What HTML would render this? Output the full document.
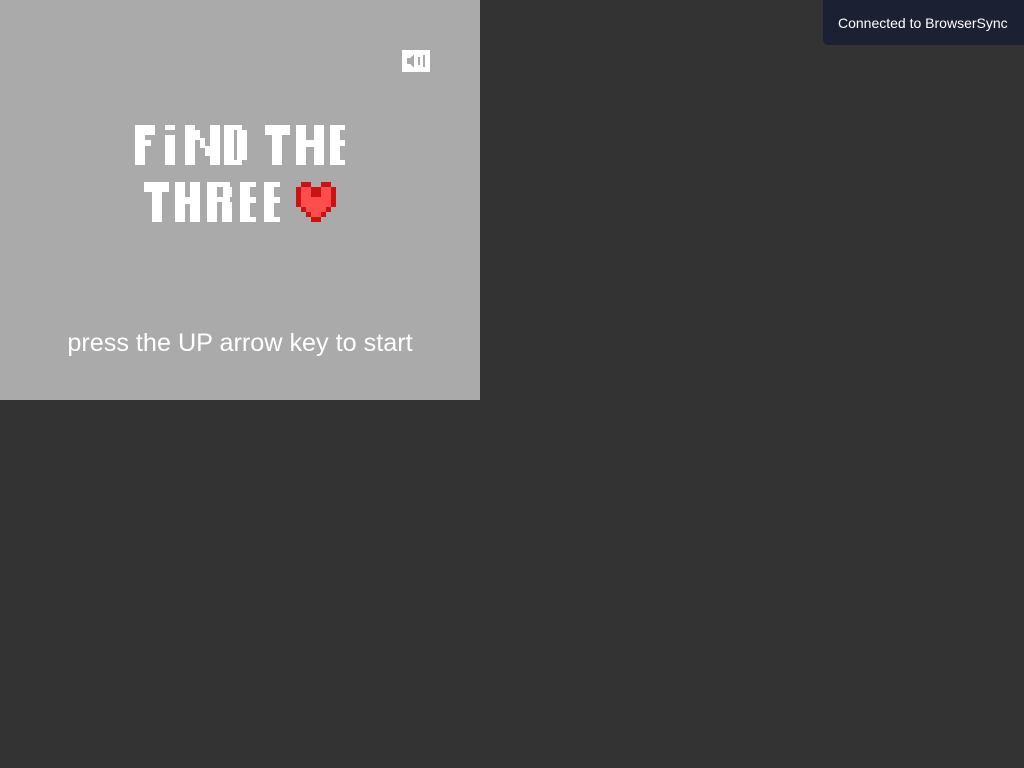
<!DOCTYPE html>
<html><head><meta charset="utf-8"><style>
html,body{margin:0;padding:0;background:#333;width:1024px;height:768px;overflow:hidden;font-family:"Liberation Sans",Arial,sans-serif}
#game{position:absolute;left:0;top:0;width:480px;height:400px;background:#aaa}
#msg{position:absolute;left:0;width:480px;top:328px;text-align:center;color:#fff;font-size:25.2px;line-height:30px}
#bs{position:absolute;left:823px;top:0;width:201px;height:45px;background:#1b2032;color:#fff;font-size:14px;line-height:46px;padding-left:15px;box-sizing:border-box;border-bottom-left-radius:5px;white-space:nowrap;overflow:hidden}
</style></head><body>
<div id="game">
<svg width="480" height="400" style="position:absolute;left:0;top:0" shape-rendering="crispEdges">
<g fill="#fff">
<rect x="135" y="125" width="10" height="40"/><rect x="135" y="125" width="20" height="10"/><rect x="135" y="140" width="16" height="6"/>
<rect x="165" y="125" width="10" height="5"/><rect x="165" y="135" width="10" height="30"/>
<rect x="185" y="125" width="10" height="40"/><rect x="210" y="125" width="10" height="40"/><rect x="195" y="130" width="5" height="10"/><rect x="200" y="138" width="5" height="10"/><rect x="205" y="146" width="5" height="10"/>
<rect x="224" y="125" width="10" height="40"/><rect x="224" y="125" width="18" height="5"/><rect x="224" y="160" width="18" height="5"/><rect x="237" y="130" width="10" height="30"/>
<rect x="265" y="125" width="25" height="10"/><rect x="272" y="125" width="10" height="40"/>
<rect x="296" y="125" width="10" height="40"/><rect x="314" y="125" width="10" height="40"/><rect x="296" y="140" width="28" height="7"/>
<rect x="330" y="125" width="10" height="40"/><rect x="330" y="125" width="15" height="5"/><rect x="330" y="140" width="15" height="6"/><rect x="330" y="160" width="15" height="5"/>
<rect x="144" y="182" width="25" height="10"/><rect x="152" y="182" width="10" height="40"/>
<rect x="175" y="182" width="10" height="40"/><rect x="190" y="182" width="10" height="40"/><rect x="175" y="197" width="25" height="7"/>
<rect x="207" y="182" width="10" height="40"/><rect x="207" y="182" width="23" height="5"/><rect x="223" y="187" width="9" height="10"/><rect x="207" y="197" width="23" height="5"/><rect x="222" y="202" width="10" height="20"/>
<rect x="240" y="182" width="10" height="40"/><rect x="240" y="182" width="16" height="5"/><rect x="240" y="197" width="16" height="6"/><rect x="240" y="217" width="16" height="5"/>
<rect x="264" y="182" width="10" height="40"/><rect x="264" y="182" width="16" height="5"/><rect x="264" y="197" width="16" height="6"/><rect x="264" y="217" width="16" height="5"/>
</g>
<g>
<rect x="296" y="187" width="40" height="20" fill="#cc1111"/>
<rect x="301" y="182" width="10" height="5" fill="#cc1111"/><rect x="321" y="182" width="10" height="5" fill="#cc1111"/>
<rect x="301" y="207" width="30" height="5" fill="#cc1111"/>
<rect x="306" y="212" width="20" height="5" fill="#cc1111"/>
<rect x="311" y="217" width="10" height="5" fill="#cc1111"/>
<rect x="301" y="187" width="10" height="5" fill="#ff4d4d"/><rect x="321" y="187" width="10" height="5" fill="#ff4d4d"/>
<rect x="301" y="192" width="30" height="15" fill="#ff4d4d"/>
<rect x="311" y="192" width="10" height="5" fill="#cc1111"/>
<rect x="306" y="207" width="20" height="5" fill="#ff4d4d"/>
<rect x="311" y="212" width="10" height="5" fill="#ff4d4d"/>
</g>
<rect x="402" y="50" width="28" height="22" fill="#fff"/>
<path d="M407 58h3l4-4v14l-4-4h-3z" fill="#aaa"/>
<rect x="418" y="57" width="2" height="8" fill="#aaa"/>
<rect x="423" y="55" width="2" height="12" fill="#aaa"/>
</svg>
<div id="msg">press the UP arrow key to start</div>
</div>
<div id="bs">Connected to BrowserSync</div>
</body></html>
